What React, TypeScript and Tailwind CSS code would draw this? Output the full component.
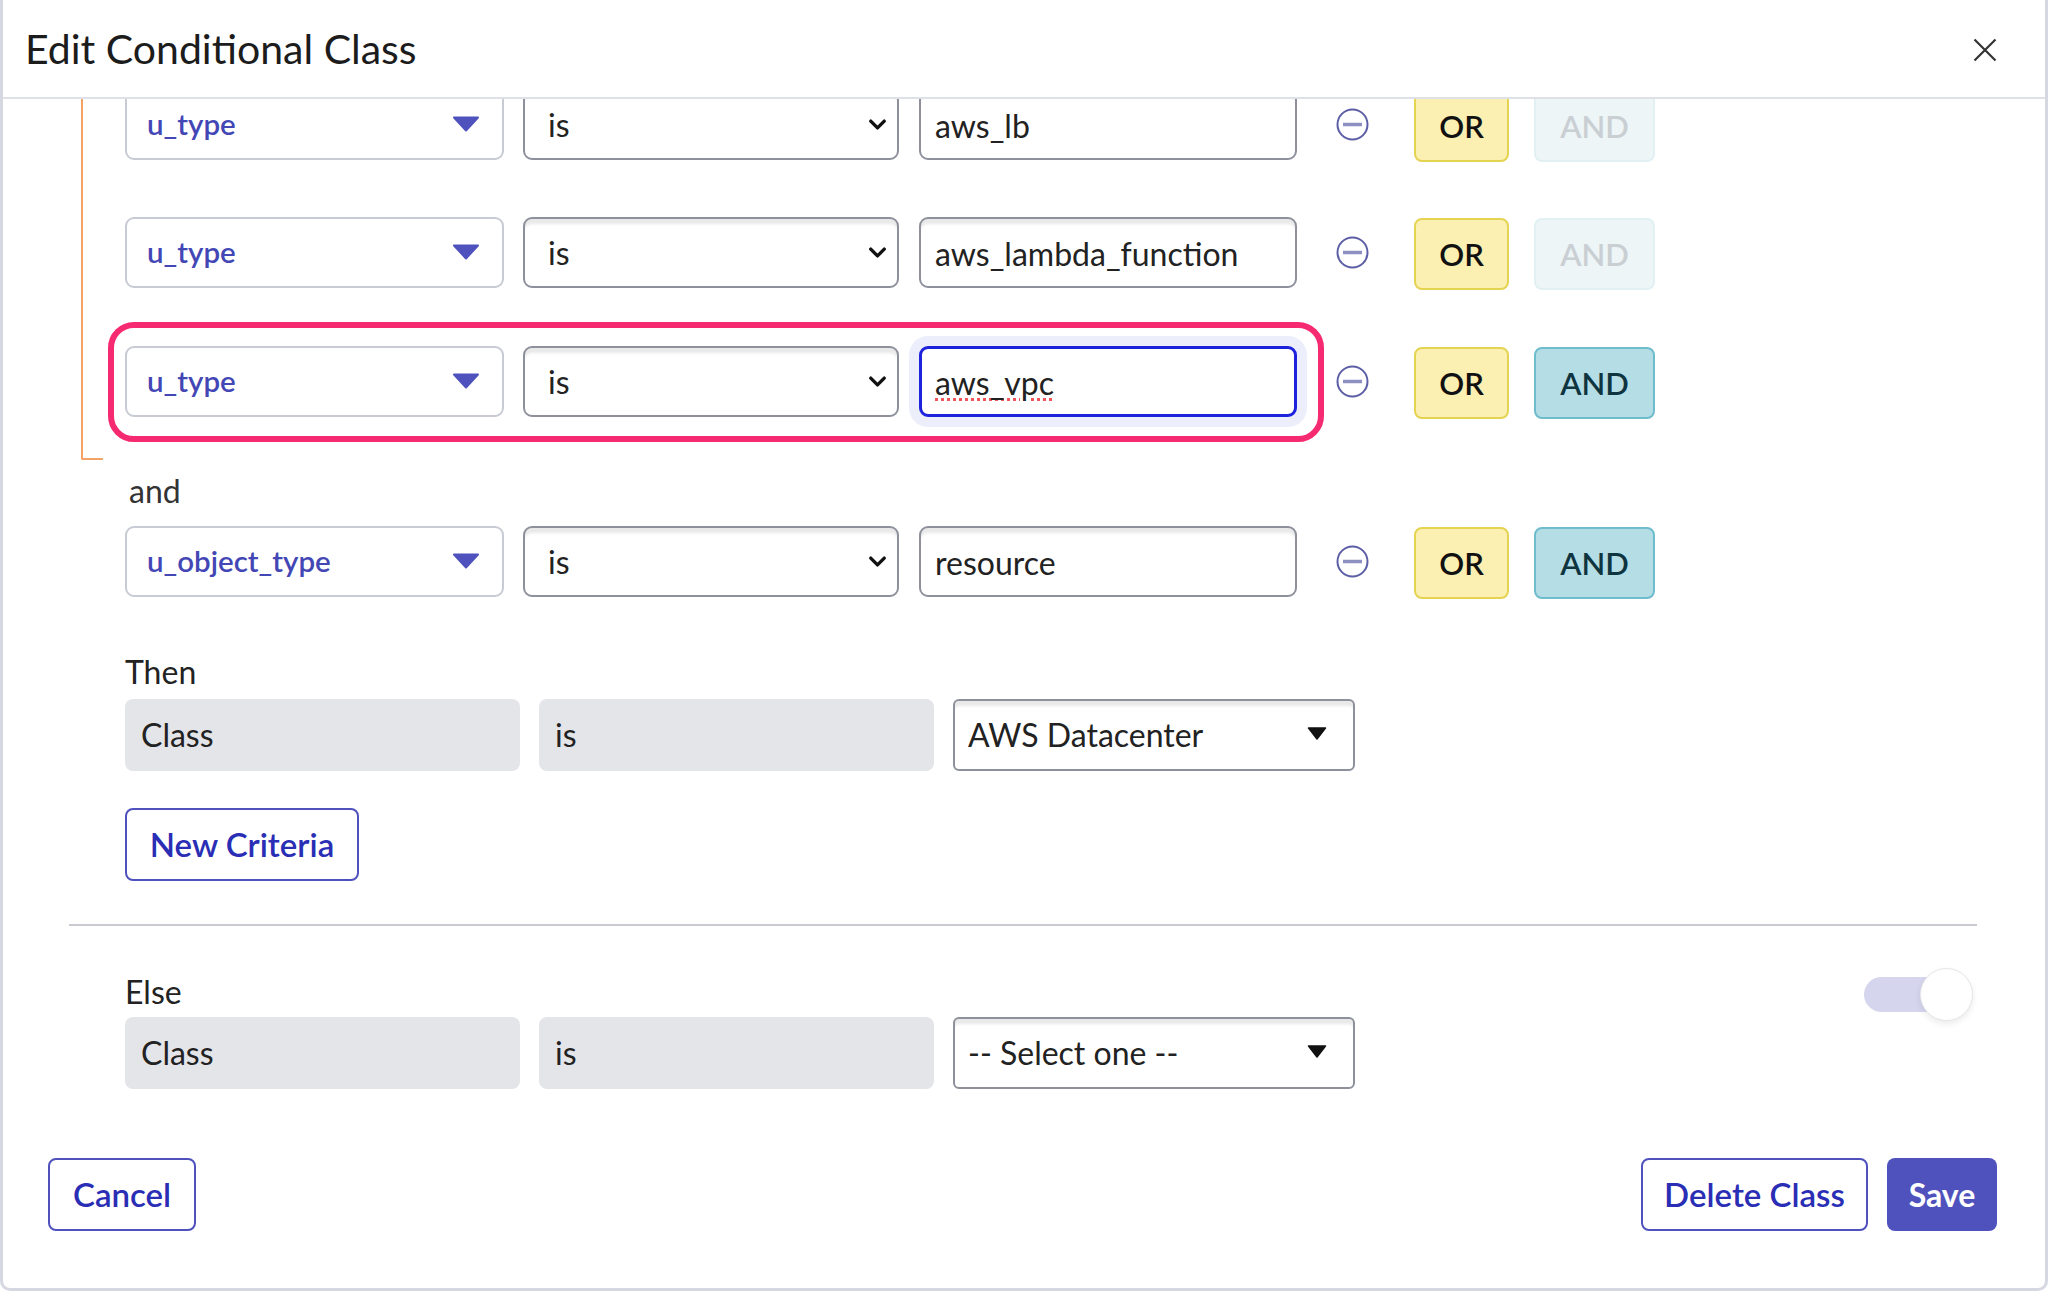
import { ChevronDown } from 'lucide-react';

const FONT = "font-['Lato','Liberation_Sans',sans-serif]";

function PurpleCaret() {
  return (
    <svg width="28" height="16" viewBox="0 0 28 16" className="mt-[-2px] mr-[22px]">
      <path d="M2 1.5h24L14 14.5z" fill="#4f52bd" stroke="#4f52bd" strokeWidth="2" strokeLinejoin="round" />
    </svg>
  );
}

function FieldSelect({ label }: { label: string }) {
  return (
    <div className="flex h-[71px] w-[379px] shrink-0 items-center justify-between rounded-[9px] border-2 border-[#c8cbd3] bg-white pl-[20px]">
      <span className="text-[29.5px] font-semibold text-[#4347b5]">{label}</span>
      <PurpleCaret />
    </div>
  );
}

function OperatorSelect() {
  return (
    <div className="ml-[19px] flex h-[71px] w-[376px] shrink-0 items-center justify-between rounded-[9px] border-2 border-[#8e919c] bg-white pl-[23px] pr-[6px] shadow-[inset_0_7px_3px_-2px_#e9e9e9]">
      <span className="text-[32px] text-[#222]">is</span>
      <ChevronDown size={27} strokeWidth={3} className="text-[#111]" />
    </div>
  );
}

function ValueInput({ value, focused }: { value: string; focused?: boolean }) {
  if (focused) {
    return (
      <div className="ml-[20px] flex h-[71px] w-[378px] shrink-0 items-center rounded-[9px] border-[3px] border-[#1d22dc] bg-white pl-[13px] pt-[3px] shadow-[0_0_0_10px_#eceffb]">
        <span className="text-[32px] text-[#222] underline decoration-[#f0555a] decoration-dotted decoration-[3px] underline-offset-[3px]">
          {value}
        </span>
      </div>
    );
  }
  return (
    <div className="ml-[20px] flex h-[71px] w-[378px] shrink-0 items-center rounded-[9px] border-2 border-[#8e919c] bg-white pl-[14px] pt-[3px] shadow-[inset_0_7px_3px_-2px_#e9e9e9]">
      <span className="text-[32px] text-[#222]">{value}</span>
    </div>
  );
}

function MinusIcon() {
  return (
    <svg width="33" height="33" viewBox="0 0 33 33" className="ml-[39px] mt-[19px] shrink-0">
      <circle cx="16.5" cy="16.5" r="15" fill="none" stroke="#5d5fa6" strokeWidth="2" />
      <path d="M7 16.5h19" stroke="#8f90c2" strokeWidth="3.5" />
    </svg>
  );
}

function CriteriaRow({
  label,
  value,
  andEnabled,
  focused,
}: {
  label: string;
  value: string;
  andEnabled?: boolean;
  focused?: boolean;
}) {
  return (
    <div className="flex items-start">
      <FieldSelect label={label} />
      <OperatorSelect />
      <ValueInput value={value} focused={focused} />
      <MinusIcon />
      <div className="ml-[45px] mt-[1px] flex h-[72px] w-[95px] shrink-0 items-center justify-center rounded-[8px] border-2 border-[#e5d352] bg-[#fbf0b2] text-[31px] font-semibold text-[#111]">
        OR
      </div>
      {andEnabled ? (
        <div className="ml-[25px] mt-[1px] flex h-[72px] w-[121px] shrink-0 items-center justify-center rounded-[8px] border-2 border-[#6fbdcc] bg-[#b5dde5] text-[31px] font-semibold text-[#0e3440]">
          AND
        </div>
      ) : (
        <div className="ml-[25px] mt-[1px] flex h-[72px] w-[121px] shrink-0 items-center justify-center rounded-[8px] border-2 border-[#e1f0f3] bg-[#edf5f7] text-[31px] font-semibold text-[#c9cfd2]">
          AND
        </div>
      )}
    </div>
  );
}

function ResultRow({ value }: { value: string }) {
  return (
    <div className="flex h-[72px] items-stretch">
      <div className="flex w-[395px] items-center rounded-[8px] bg-[#e4e5e9] pl-[16px] text-[32px] text-[#222]">Class</div>
      <div className="ml-[19px] flex w-[395px] items-center rounded-[8px] bg-[#e4e5e9] pl-[16px] text-[32px] text-[#222]">is</div>
      <div className="ml-[19px] flex w-[402px] items-center justify-between rounded-[6px] border-2 border-[#8e919c] bg-white pl-[13px] pr-[26px] text-[32px] text-[#222] shadow-[inset_0_7px_3px_-2px_#e9e9e9]">
        <span>{value}</span>
        <svg width="20" height="13" viewBox="0 0 20 13" className="mt-[-3px]">
          <path d="M1.5 1h17L10 12z" fill="#111" stroke="#111" strokeWidth="1.5" strokeLinejoin="round" />
        </svg>
      </div>
    </div>
  );
}

function OutlineButton({ children, width }: { children: string; width: string }) {
  return (
    <button className={`h-[73px] ${width} rounded-[8px] border-2 border-[#4f52bd] bg-white text-[33px] font-semibold text-[#2a2eb5]`}>
      {children}
    </button>
  );
}

export default function App() {
  return (
    <div className={`flex h-[1291px] w-[2048px] flex-col overflow-hidden rounded-b-[10px] border-x-[3px] border-b-[3px] border-x-[#d5d8e0] border-b-[#d5d8e0] bg-white ${FONT}`}>
      <header className="z-10 flex h-[99px] shrink-0 items-center justify-between border-b-2 border-[#dfe1e8] bg-white pl-[22px] pr-[48px]">
        <h1 className="text-[41px] font-normal text-[#1c1c1c]">Edit Conditional Class</h1>
        <svg width="24" height="24" viewBox="0 0 24 24" className="mt-[2px]">
          <path d="M1.5 1.5l21 21M22.5 1.5l-21 21" stroke="#333" strokeWidth="2.2" fill="none" />
        </svg>
      </header>

      <main className="min-h-0 flex-1 overflow-hidden">
        {/* list is scrolled a little: first row slides under the header */}
        <div className="mt-[-10px] pl-[122px]">
          <div className="relative flex flex-col gap-[56px] pb-[41px]">
            <div className="absolute bottom-0 left-[-44px] top-0 w-[22px] rounded-bl-[2px] border-b-2 border-l-2 border-[#f5a266]" />
            <div className="mb-[-1px]">
              <CriteriaRow label="u_type" value="aws_lb" />
            </div>
            <CriteriaRow label="u_type" value="aws_lambda_function" />
            <div className="relative">
              <CriteriaRow label="u_type" value="aws_vpc" andEnabled focused />
              <div className="pointer-events-none absolute bottom-[-23px] left-[-17px] top-[-24px] w-[1216px] rounded-[26px] border-[6px] border-[#f52a70]" />
            </div>
          </div>

          <div className="mb-[17px] mt-[13px] pl-[4px] text-[32px] leading-[36px] text-[#333]">and</div>
          <CriteriaRow label="u_object_type" value="resource" andEnabled />

          <div className="mb-[9px] mt-[55px] text-[32px] leading-[36px] text-[#222]">Then</div>
          <ResultRow value="AWS Datacenter" />
          <div className="mt-[37px]">
            <OutlineButton width="w-[234px]">New Criteria</OutlineButton>
          </div>
        </div>

        <div className="ml-[66px] mr-[68px] mt-[43px] h-[2px] bg-[#c9cbd1]" />

        <div className="mt-[48px] pl-[122px]">
          <div className="flex h-[36px] items-center justify-between pr-[73px]">
            <span className="text-[32px] leading-[36px] text-[#222]">Else</span>
            <div className="relative mt-[5px] h-[35px] w-[108px] rounded-full bg-[#d5d6ee]">
              <div className="absolute right-[-1px] top-[-9px] h-[53px] w-[53px] rounded-full border border-[#e6e6ea] bg-white shadow-[0_3px_6px_rgba(0,0,0,0.08)]" />
            </div>
          </div>
          <div className="mt-[7px]">
            <ResultRow value="-- Select one --" />
          </div>
        </div>

        <div className="mt-[69px] flex items-center justify-between pl-[45px] pr-[48px]">
          <OutlineButton width="w-[148px]">Cancel</OutlineButton>
          <div className="flex gap-[19px]">
            <OutlineButton width="w-[227px]">Delete Class</OutlineButton>
            <button className="h-[73px] w-[110px] rounded-[8px] bg-[#4f52bd] text-[32px] font-bold text-white">Save</button>
          </div>
        </div>
      </main>
    </div>
  );
}
